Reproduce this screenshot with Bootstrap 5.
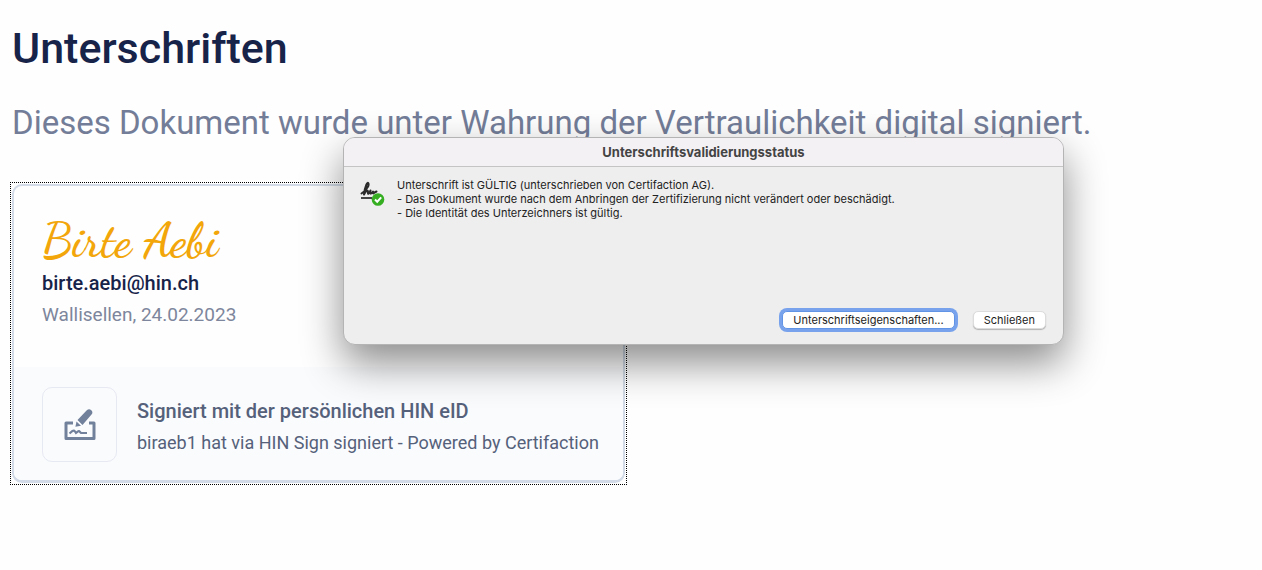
<!DOCTYPE html>
<html lang="de">
<head>
<meta charset="utf-8">
<meta name="viewport" content="width=device-width, initial-scale=1">
<title>Unterschriften</title>
<link href="https://cdn.jsdelivr.net/npm/bootstrap@5.3.0/dist/css/bootstrap.min.css" rel="stylesheet">
<style>
body { font-family: Roboto, "Liberation Sans", sans-serif; background: #fefefe; color: #172349; }
.sheet { padding: 22px 10px; }
.page-title { font-size: 43px; line-height: 52px; font-weight: 500; margin: 0 2px 28px; }
.page-intro { font-size: 33px; line-height: 42px; color: #737d98; margin: 0 2px 38px; }
.sig-frame { border: 1px dotted #000; padding: 1px; max-width: 617px; }
.sig-card { --bs-card-border-color: #d1dae6; --bs-card-border-radius: 10px; --bs-card-inner-border-radius: 8px; --bs-card-bg: #fefefe; border-width: 2px 2px 3px; color: #172349; }
.sig-body { padding: 29px 28px 20px; min-height: 181px; }
.sig-name { font-family: Satisfy, "Dancing Script", "Liberation Serif", cursive; font-weight: 600; font-size: 48px; line-height: 52px; color: #f2a60a; }
.sig-mail { font-size: 20px; line-height: 32px; font-weight: 500; }
.sig-place { font-size: 19px; line-height: 32px; color: #7d869c; }
.sig-foot { background: #fafbfd; color: #55617a; padding: 20px 16px 18px 28px; border-radius: 0 0 8px 8px; }
.sig-icon { width: 75px; height: 75px; border: 1px solid #e6e9f1; border-radius: 10px; }
.foot-copy { padding: 4px 0 0 20px; }
.foot-title { font-size: 20px; line-height: 32px; font-weight: 500; }
.foot-text { font-size: 18px; line-height: 32px; }
.status-dialog { font-family: Inter, "Liberation Sans", sans-serif; left: 343px; top: 137px; width: 721px; max-width: calc(100vw - 24px); background: #eee; color: #222; border: 1px solid #b4b4b4; border-radius: 12px; box-shadow: 0 18px 40px rgba(0,0,0,.45); font-size: 11px; line-height: 14px; }
.dialog-title { font-size: 13px; line-height: 28px; font-weight: 700; color: #444; background: #f4f1f4; border-bottom: 1px solid #c4c4c4; border-radius: 11px 11px 0 0; }
.dialog-content { padding: 11px 16px; min-height: 144px; gap: 12px; }
.mac-btn { --bs-btn-padding-x: 10px; --bs-btn-padding-y: 1px; --bs-btn-font-size: 11px; --bs-btn-line-height: 14px; --bs-btn-bg: #fff; --bs-btn-color: #222; --bs-btn-border-color: #dcdcdc; --bs-btn-border-radius: 5px; box-shadow: 0 1px 1px rgba(0,0,0,.25); }
.mac-btn-focus { --bs-btn-border-color: #6294e6; box-shadow: 0 0 0 3px #78a3ec; }
.dialog-actions { padding: 0 17px 15px; gap: 18px; }
</style>
</head>
<body>
<main class="sheet">
  <h1 class="page-title">Unterschriften</h1>
  <p class="page-intro">Dieses Dokument wurde unter Wahrung der Vertraulichkeit digital signiert.</p>
  <section class="sig-frame">
    <article class="card sig-card">
      <div class="sig-body">
        <div class="sig-name">Birte Aebi</div>
        <div class="sig-mail">birte.aebi@hin.ch</div>
        <div class="sig-place">Wallisellen, 24.02.2023</div>
      </div>
      <div class="sig-foot d-flex align-items-center">
        <div class="sig-icon d-flex flex-shrink-0 align-items-center justify-content-center">
          <svg width="32" height="32" viewBox="0 0 32 32" fill="none" stroke="#72819b" aria-hidden="true">
            <path d="M9 14H2V29.500H30V14H25" stroke-width="3" stroke-linejoin="round"/>
            <path d="M5.500 24.500l3-2.500q1.500-1 2.500.5l1 1.500 2-1.500q1-1 2 .5l1 1h6" stroke-width="2.200"/>
            <path d="M13.500 11L22.800 1.300q2.300-2.200 4.500 0t0 4.500L18.500 16z" fill="#72819b" stroke="none"/>
            <path d="M12.500 12.500l4.500 4.300-5.600 1z" fill="#72819b" stroke="none"/>
          </svg>
        </div>
        <div class="foot-copy">
          <div class="foot-title">Signiert mit der persönlichen HIN eID</div>
          <div class="foot-text">biraeb1 hat via HIN Sign signiert - Powered by Certifaction</div>
        </div>
      </div>
    </article>
  </section>
</main>
<div class="status-dialog position-absolute" role="dialog" aria-labelledby="dialogTitle">
  <h2 class="dialog-title text-center mb-0" id="dialogTitle">Unterschriftsvalidierungsstatus</h2>
  <div class="dialog-content d-flex">
    <svg class="flex-shrink-0" width="25" height="28" viewBox="0 0 25 28" fill="none" aria-hidden="true">
      <path d="M1.500 15.500C5 13 9.500 8 8.500 5.500S5 8 4 16.500c2-4 4-5 4-2.500-.3 3 1 2 2.500-1.500-.8 4 .3 4 2.500 1-.4 2 .5 2.500 1.500 1l2-1" stroke="#2b2b2b" stroke-width="2" stroke-linecap="round" stroke-linejoin="round"/>
      <path d="M1 20h11" stroke="#444" stroke-width="2"/>
      <circle cx="18" cy="21.500" r="6.300" fill="#35ae22"/>
      <path d="M15 21.500l2.200 2.200 4-4.400" stroke="#fff" stroke-width="2"/>
    </svg>
    <div>Unterschrift ist GÜLTIG (unterschrieben von Certifaction AG).<br>- Das Dokument wurde nach dem Anbringen der Zertifizierung nicht verändert oder beschädigt.<br>- Die Identität des Unterzeichners ist gültig.</div>
  </div>
  <div class="dialog-actions d-flex justify-content-end">
    <button type="button" class="btn mac-btn mac-btn-focus">Unterschriftseigenschaften...</button>
    <button type="button" class="btn mac-btn">Schließen</button>
  </div>
</div>
<script src="https://cdn.jsdelivr.net/npm/bootstrap@5.3.0/dist/js/bootstrap.bundle.min.js"></script>
</body>
</html>
